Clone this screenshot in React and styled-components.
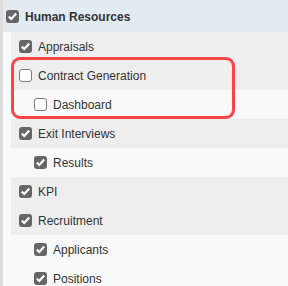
import React from 'react';
import styled, { createGlobalStyle } from 'styled-components';

const GlobalStyle = createGlobalStyle`
  html, body {
    margin: 0;
    padding: 0;
    background: #f9f9f9;
  }
  body {
    font-family: "Liberation Sans", Arial, sans-serif;
    font-size: 12px;
    color: #333;
  }
`;

const Tree = styled.div`
  width: 285px;
  height: 286px;
  overflow: hidden;
  border-left: 3px solid #dedede;
  background: #f9f9f9;
`;

const Header = styled.div`
  display: flex;
  align-items: center;
  gap: 6px;
  height: 32px;
  padding-left: 3px;
  background: #e1ebf1;
  font-weight: bold;
  font-size: 12px;
  color: #333;
`;

const Row = styled.div`
  display: flex;
  align-items: center;
  gap: 6px;
  height: 29px;
  margin-left: 8px;
  padding-left: ${p => (p.$level === 2 ? 23 : 8)}px;
  background: ${p => (p.$level === 2 ? '#f9f9f9' : '#eeeeee')};
  font-size: 12px;
  color: #333;
`;

const Label = styled.span`
  line-height: 14px;
  padding-top: 1px;
`;

const Highlight = styled.div`
  position: relative;

  &::after {
    content: '';
    position: absolute;
    top: -4px;
    left: 8px;
    right: 53px;
    bottom: 0;
    border: 3px solid #fb4447;
    border-radius: 9px;
    pointer-events: none;
  }
`;

const Box = styled.span`
  display: inline-flex;
  align-items: center;
  justify-content: center;
  flex: none;
  width: 13px;
  height: 13px;
  box-sizing: border-box;
  border-radius: 3px;
  background: ${p => (p.$checked ? '#666' : '#fff')};
  border: ${p => (p.$checked ? 'none' : '1px solid #7a7a7a')};
`;

function Check({ checked }) {
  return (
    <Box $checked={checked}>
      {checked && (
        <svg width="11" height="11" viewBox="0 0 11 11">
          <path d="M1.8 5.6 L4.3 8 L9.2 2.6" fill="none" stroke="#fff" strokeWidth="2.2" />
        </svg>
      )}
    </Box>
  );
}

function Item({ label, level = 1, checked = true }) {
  return (
    <Row $level={level}>
      <Check checked={checked} />
      <Label>{label}</Label>
    </Row>
  );
}

export default function App() {
  return (
    <>
      <GlobalStyle />
      <Tree>
        <Header>
          <Check checked />
          <Label>Human Resources</Label>
        </Header>
        <Item label="Appraisals" />
        <Highlight>
          <Item label="Contract Generation" checked={false} />
          <Item label="Dashboard" level={2} checked={false} />
        </Highlight>
        <Item label="Exit Interviews" />
        <Item label="Results" level={2} />
        <Item label="KPI" />
        <Item label="Recruitment" />
        <Item label="Applicants" level={2} />
        <Item label="Positions" level={2} />
      </Tree>
    </>
  );
}
